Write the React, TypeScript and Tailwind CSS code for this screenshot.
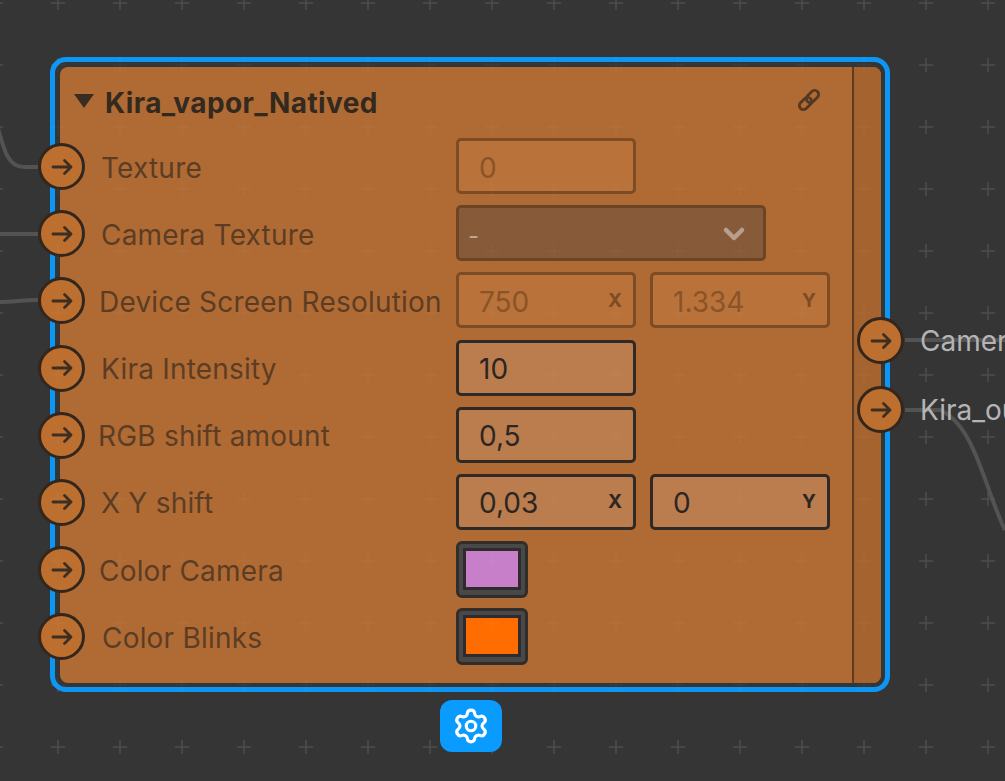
import { ChevronDown, Settings } from "lucide-react";
import { FC, ReactNode } from "react";

const font = "font-['Inter','Liberation_Sans',sans-serif]";

const Grid: FC<{ id: string; className: string }> = ({ id, className }) => (
  <svg className={className} width="1005" height="781">
    <defs>
      <pattern id={id} x="27" y="34" width="62" height="62" patternUnits="userSpaceOnUse">
        <path d="M31 24v14M24 31h14" fill="none" stroke="currentColor" strokeWidth="1.5" />
      </pattern>
    </defs>
    <rect width="1005" height="781" fill={`url(#${id})`} />
  </svg>
);

const Port: FC = () => (
  <div className="flex h-[47px] w-[47px] shrink-0 items-center justify-center rounded-full border-[3px] border-[#33271d] bg-[#bd6f30]">
    <svg width="24" height="24" viewBox="0 0 24 24" fill="none" stroke="#3d2e22" strokeWidth="2.8" strokeLinecap="round" strokeLinejoin="round">
      <path d="M3 12H21M14.5 5.5L21 12L14.5 18.5" />
    </svg>
  </div>
);

const Field: FC<{ value: string; axis?: string; active?: boolean; className?: string }> = ({
  value,
  axis,
  active,
  className = "w-[180px]",
}) => (
  <div
    className={`flex h-[56px] items-center justify-between rounded-[5px] border-[3px] pl-[20px] pr-[11px] ${className} ${
      active
        ? "border-[#2f2a26] bg-[#bb7c4e] text-[#2b2622]"
        : "border-[#7d4b24] bg-[#b9723a] text-[#8a5428]"
    }`}
  >
    <span className="pt-[3px] text-[28px] leading-none">{value}</span>
    {axis && (
      <span className={`text-[19px] font-bold leading-none ${active ? "text-[#2b2622]" : "text-[#7d4b24]"}`}>
        {axis}
      </span>
    )}
  </div>
);

const Swatch: FC<{ color: string }> = ({ color }) => (
  <div className="flex h-[57px] w-[72px] items-center justify-center rounded-[6px] border-[3px] border-[#332d29] bg-[#484848]">
    <div className={`h-[42px] w-[58px] border-[3px] border-[#2f2a2c] ${color}`} />
  </div>
);

const rows: { label: string; indent: string; control: ReactNode }[] = [
  { label: "Texture", indent: "ml-[16px]", control: <Field value="0" /> },
  {
    label: "Camera Texture",
    indent: "ml-[16px]",
    control: (
      <div className="flex h-[56px] w-[310px] items-center justify-between rounded-[5px] border-[3px] border-[#6b4526] bg-[#875b39] pl-[9px] pr-[13px]">
        <span className="pt-[5px] text-[24px] leading-none text-[#bfa48e]">-</span>
        <ChevronDown size={32} strokeWidth={3.4} className="mt-[2px] text-[#b9a08c]" />
      </div>
    ),
  },
  {
    label: "Device Screen Resolution",
    indent: "ml-[14px]",
    control: (
      <div className="flex gap-[14px]">
        <Field value="750" axis="X" />
        <Field value="1.334" axis="Y" />
      </div>
    ),
  },
  { label: "Kira Intensity", indent: "ml-[16px]", control: <Field value="10" active /> },
  { label: "RGB shift amount", indent: "ml-[13px]", control: <Field value="0,5" active /> },
  {
    label: "X Y shift",
    indent: "ml-[16px]",
    control: (
      <div className="flex gap-[14px]">
        <Field value="0,03" axis="X" active />
        <Field value="0" axis="Y" active />
      </div>
    ),
  },
  { label: "Color Camera", indent: "ml-[14px]", control: <Swatch color="bg-[#c87fc9]" /> },
  { label: "Color Blinks", indent: "ml-[17px]", control: <Swatch color="bg-[#ff6d00]" /> },
];

export default function App() {
  return (
    <div className={`relative h-[781px] w-[1005px] overflow-hidden bg-[#353535] ${font}`}>
      <Grid id="grid-back" className="absolute left-0 top-0 text-[#474747]" />

      {/* wires */}
      <svg className="absolute left-0 top-0" width="1005" height="781" fill="none" stroke="#535353" strokeWidth="4">
        <path d="M-2 128C4 150 8 167 24 167H38" />
        <path d="M-2 234H38" />
        <path d="M-2 302C14 302 22 300 38 300" />
        <path d="M905 340H1005" />
        <path d="M905 410H940C975 425 985 490 1005 530" />
      </svg>

      <span className="absolute left-[920px] top-[324px] text-[28px] leading-[34px] text-[#b4b4b4]">Camera</span>
      <span className="absolute left-[920px] top-[393px] text-[28px] leading-[34px] text-[#b4b4b4]">Kira_output</span>

      {/* node */}
      <div className="absolute left-[50px] top-[57px] h-[635px] w-[840px] rounded-[16px] border-[5px] border-[#0d97f5] bg-[#353535] pb-[4px] pl-[5px] pr-[4px] pt-[5px]">
        <div className="flex h-full overflow-hidden rounded-[8px] bg-[#b06b35]">
          <div className="flex-1 pt-[3px]">
            <div className="flex h-[64px] items-center pl-[14px] pr-[30px]">
              <svg width="20" height="14" viewBox="0 0 20 14" className="mb-[2px] shrink-0">
                <path d="M0 0H20L10 14Z" fill="#3a2c20" />
              </svg>
              <span className="ml-[11px] flex-1 pt-[2px] text-[28px] font-bold leading-none tracking-[0.4px] text-[#33291f]">
                Kira_vapor_Natived
              </span>
              <svg width="26" height="26" viewBox="0 0 26 26" fill="none" stroke="#533823" strokeWidth="2.8" className="mb-[4px]">
                <rect x="9.5" y="5.5" width="14" height="8" rx="4" transform="rotate(-45 16.5 9.5)" />
                <rect x="2.5" y="12.5" width="14" height="8" rx="4" transform="rotate(-45 9.5 16.5)" />
              </svg>
            </div>
          </div>
          <div className="w-[29px] shrink-0 border-l-2 border-[#5f3c20] bg-[#a5632f]" />
        </div>
      </div>

      {/* rows overlap the node edge, so they sit on top of it */}
      <div className="absolute left-[38px] top-[138.5px] flex flex-col gap-[11.2px]">
        {rows.map((row) => (
          <div key={row.label} className="flex h-[56px] items-center">
            <Port />
            <span className={`${row.indent} pt-[2px] text-[28px] leading-none tracking-[0.2px] text-[#5c3d24]`}>{row.label}</span>
          </div>
        ))}
      </div>
      <div className="absolute left-[456px] top-[138px] flex flex-col gap-[11.2px]">
        {rows.map((row) => (
          <div key={row.label} className="flex h-[56px] items-center">
            {row.control}
          </div>
        ))}
      </div>

      <div className="absolute left-[857px] top-[317px] flex flex-col gap-[22px]">
        <Port />
        <Port />
      </div>

      <Grid id="grid-front" className="pointer-events-none absolute left-0 top-0 text-white/[0.025]" />

      <div className="absolute left-[440px] top-[700px] flex h-[52px] w-[62px] items-center justify-center rounded-[12px] bg-[#0a9bff]">
        <Settings size={38} strokeWidth={2} className="text-white" />
      </div>
    </div>
  );
}
